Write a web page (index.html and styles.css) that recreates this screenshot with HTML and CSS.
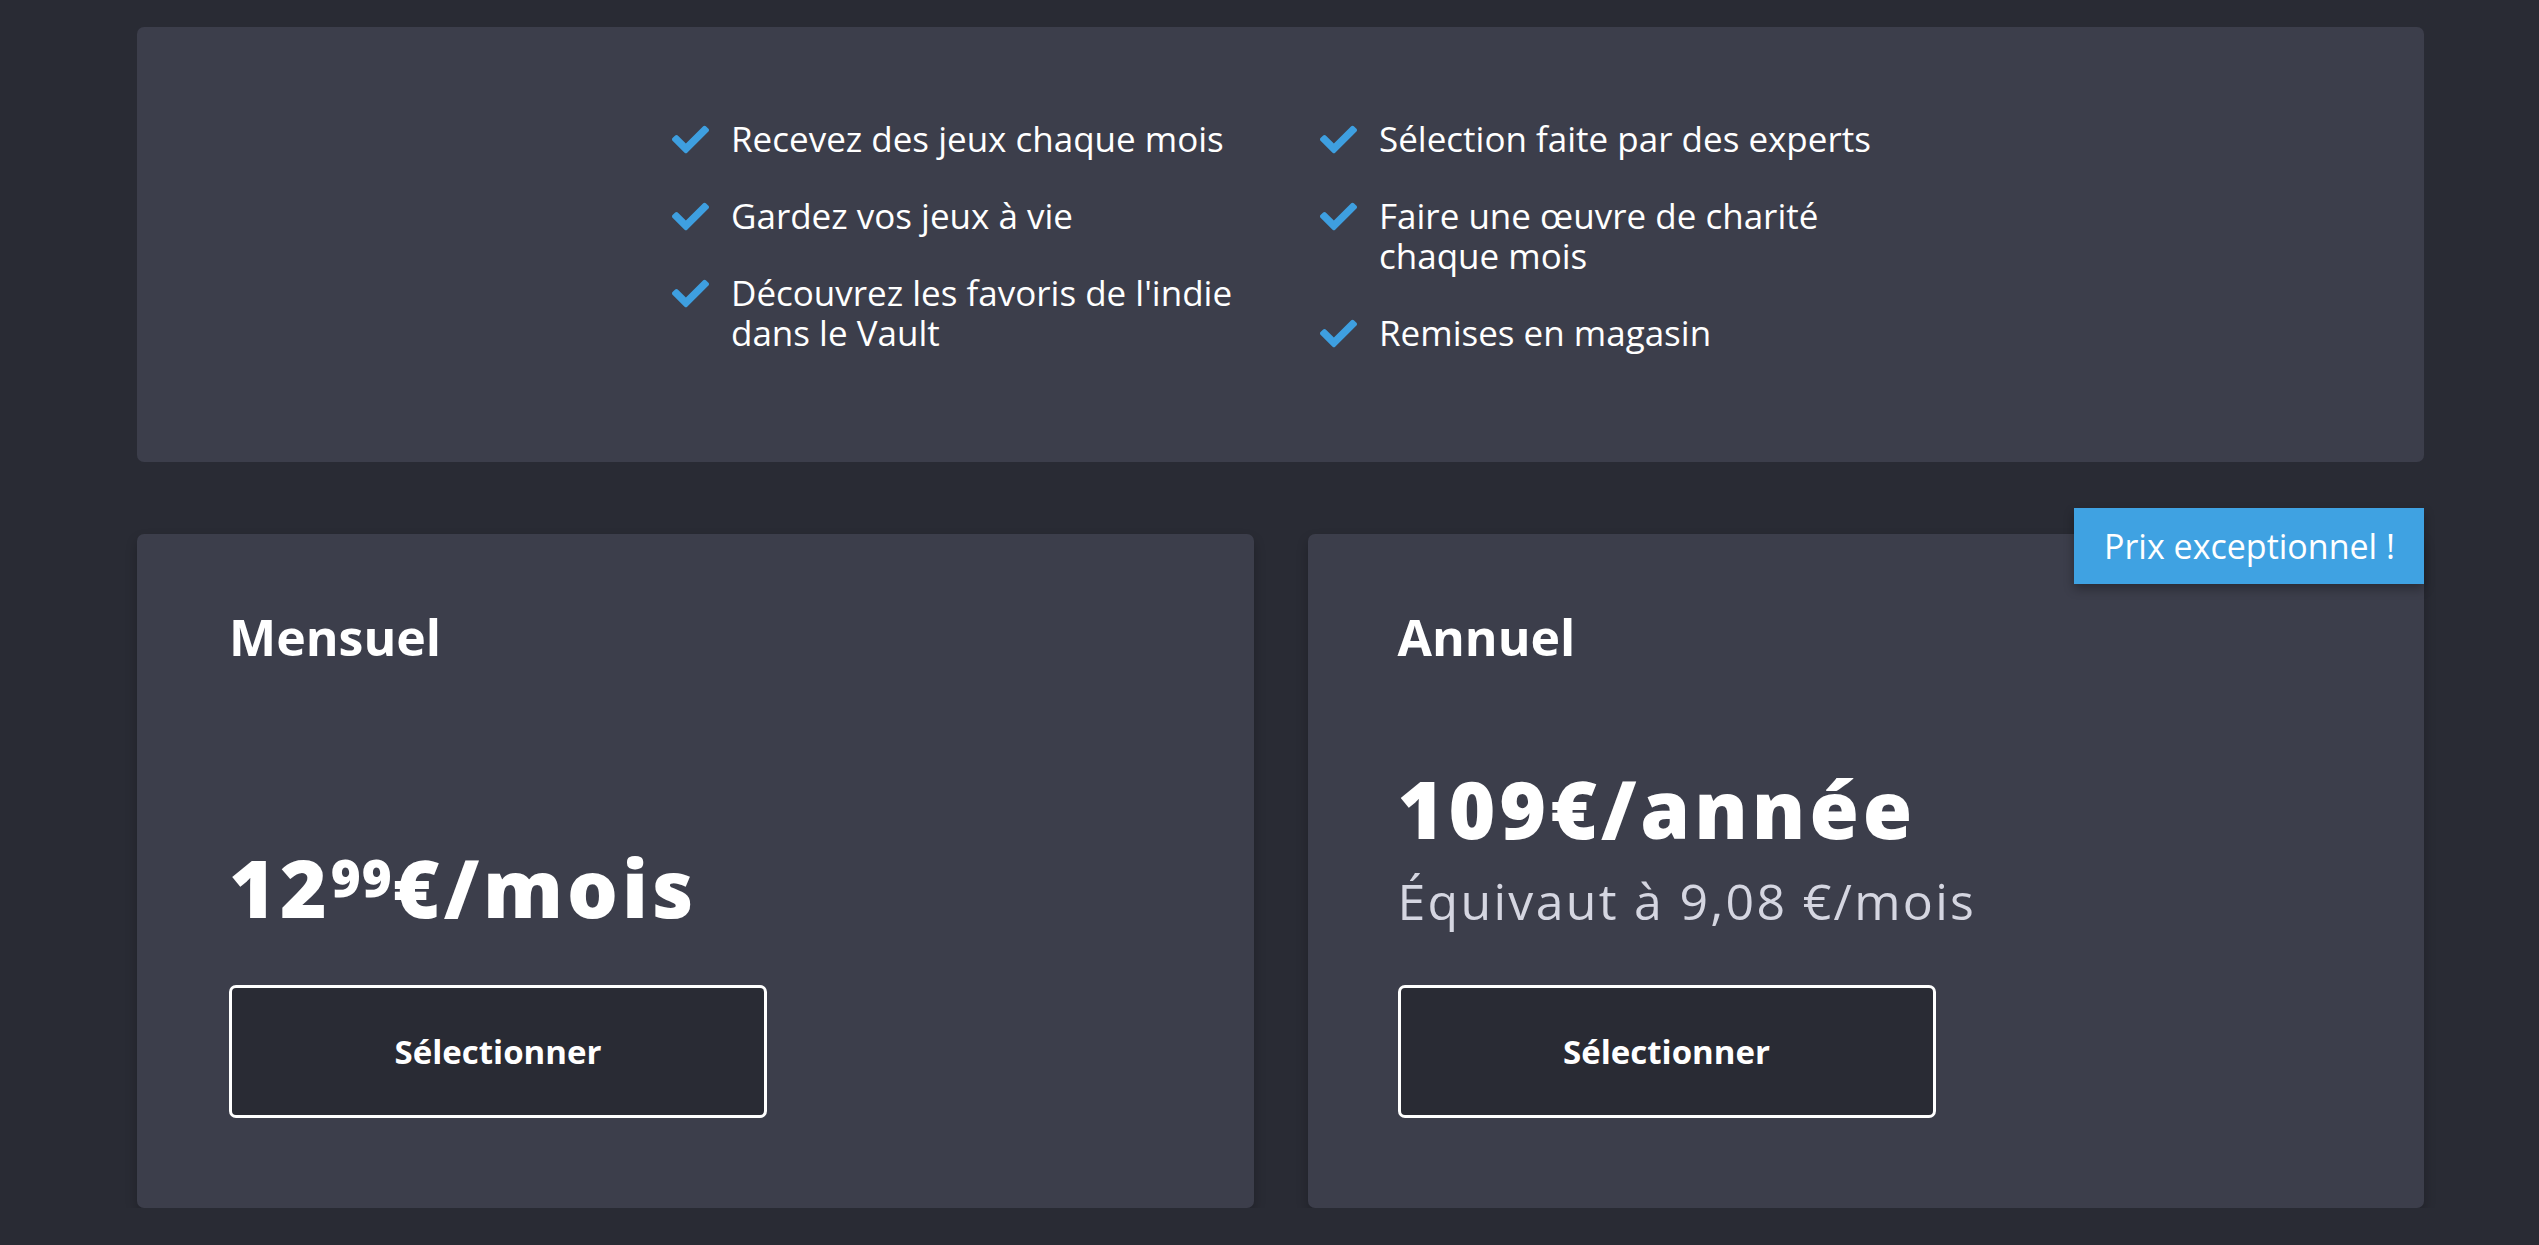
FILE: index.html
```html
<!DOCTYPE html>
<html lang="fr">
<head>
<meta charset="utf-8">
<title>Abonnement</title>
<link rel="stylesheet" href="styles.css">
</head>
<body>
<main class="page">
  <section class="perks">
    <div class="perks-grid">
      <ul class="perk-col">
        <li class="perk"><svg class="check" viewBox="0 64 512 384"><path d="M173.898 439.404l-166.4-166.4c-9.997-9.997-9.997-26.206 0-36.204l36.203-36.204c9.997-9.998 26.207-9.998 36.204 0L192 312.69 432.095 72.596c9.997-9.997 26.207-9.997 36.204 0l36.203 36.204c9.997 9.997 9.997 26.206 0 36.204l-294.4 294.401c-9.998 9.997-26.207 9.997-36.204-.001z"/></svg><span>Recevez des jeux chaque mois</span></li>
        <li class="perk"><svg class="check" viewBox="0 64 512 384"><path d="M173.898 439.404l-166.4-166.4c-9.997-9.997-9.997-26.206 0-36.204l36.203-36.204c9.997-9.998 26.207-9.998 36.204 0L192 312.69 432.095 72.596c9.997-9.997 26.207-9.997 36.204 0l36.203 36.204c9.997 9.997 9.997 26.206 0 36.204l-294.4 294.401c-9.998 9.997-26.207 9.997-36.204-.001z"/></svg><span>Gardez vos jeux à vie</span></li>
        <li class="perk"><svg class="check" viewBox="0 64 512 384"><path d="M173.898 439.404l-166.4-166.4c-9.997-9.997-9.997-26.206 0-36.204l36.203-36.204c9.997-9.998 26.207-9.998 36.204 0L192 312.69 432.095 72.596c9.997-9.997 26.207-9.997 36.204 0l36.203 36.204c9.997 9.997 9.997 26.206 0 36.204l-294.4 294.401c-9.998 9.997-26.207 9.997-36.204-.001z"/></svg><span>Découvrez les favoris de l'indie<br>dans le Vault</span></li>
      </ul>
      <ul class="perk-col">
        <li class="perk"><svg class="check" viewBox="0 64 512 384"><path d="M173.898 439.404l-166.4-166.4c-9.997-9.997-9.997-26.206 0-36.204l36.203-36.204c9.997-9.998 26.207-9.998 36.204 0L192 312.69 432.095 72.596c9.997-9.997 26.207-9.997 36.204 0l36.203 36.204c9.997 9.997 9.997 26.206 0 36.204l-294.4 294.401c-9.998 9.997-26.207 9.997-36.204-.001z"/></svg><span>Sélection faite par des experts</span></li>
        <li class="perk"><svg class="check" viewBox="0 64 512 384"><path d="M173.898 439.404l-166.4-166.4c-9.997-9.997-9.997-26.206 0-36.204l36.203-36.204c9.997-9.998 26.207-9.998 36.204 0L192 312.69 432.095 72.596c9.997-9.997 26.207-9.997 36.204 0l36.203 36.204c9.997 9.997 9.997 26.206 0 36.204l-294.4 294.401c-9.998 9.997-26.207 9.997-36.204-.001z"/></svg><span>Faire une œuvre de charité<br>chaque mois</span></li>
        <li class="perk"><svg class="check" viewBox="0 64 512 384"><path d="M173.898 439.404l-166.4-166.4c-9.997-9.997-9.997-26.206 0-36.204l36.203-36.204c9.997-9.998 26.207-9.998 36.204 0L192 312.69 432.095 72.596c9.997-9.997 26.207-9.997 36.204 0l36.203 36.204c9.997 9.997 9.997 26.206 0 36.204l-294.4 294.401c-9.998 9.997-26.207 9.997-36.204-.001z"/></svg><span>Remises en magasin</span></li>
      </ul>
    </div>
  </section>

  <section class="plans">
    <article class="plan">
      <h2 class="plan-title">Mensuel</h2>
      <div class="price-block">
        <div class="price">12<sup class="cents">99</sup>€/mois</div>
      </div>
      <button class="select-btn" type="button">Sélectionner</button>
    </article>
    <article class="plan plan-featured">
      <div class="badge">Prix exceptionnel !</div>
      <h2 class="plan-title">Annuel</h2>
      <div class="price-block">
        <div class="price">109€/année</div>
        <div class="price-note">Équivaut à 9,08 €/mois</div>
      </div>
      <button class="select-btn" type="button">Sélectionner</button>
    </article>
  </section>
</main>
</body>
</html>
```

FILE: styles.css
```css
* { box-sizing: border-box; }

html, body {
  margin: 0;
  padding: 0;
  background: #292b34;
  color: #ffffff;
  font-family: "Open Sans", "Noto Sans", sans-serif;
}

.page {
  width: 2287px;
  margin-left: 137px;
  padding-top: 27px;
}

/* ---------- perks panel ---------- */
.perks {
  background: #3c3e4b;
  border-radius: 7px;
  padding: 92px 0 109px 31px;
}

.perks-grid {
  display: flex;
  justify-content: center;
  gap: 48px;
}

.perk-col {
  list-style: none;
  margin: 0;
  padding: 0;
  width: 600px;
  display: flex;
  flex-direction: column;
  gap: 37px;
}

.perk {
  display: flex;
  align-items: flex-start;
  gap: 22px;
  font-size: 35px;
  line-height: 40px;
  color: #ffffff;
}

.check {
  flex: none;
  width: 37px;
  height: 29px;
  margin-top: 6px;
  fill: #3e9fe0;
}

/* ---------- plans ---------- */
.plans {
  display: grid;
  grid-template-columns: 1fr 1fr;
  gap: 54px;
  margin-top: 72px;
}

.plan {
  position: relative;
  min-height: 674px;
  background: #3c3e4b;
  border-radius: 7px;
  padding: 78px 90px 90px 92px;
  display: flex;
  flex-direction: column;
  align-items: flex-start;
  box-shadow: 0 6px 12px rgba(0, 0, 0, 0.22);
}

.plan-featured {
  padding-left: 90px;
}

.plan-title {
  margin: 0;
  font-size: 50px;
  line-height: 50px;
  font-weight: 700;
  color: #ffffff;
}

.price-block {
  margin-top: auto;
  margin-bottom: 59px;
}

.price {
  font-size: 80px;
  line-height: 78px;
  font-weight: 800;
  letter-spacing: 4px;
  color: #ffffff;
  white-space: nowrap;
}

.cents {
  font-size: 0.64em;
  line-height: 0;
  letter-spacing: 1px;
  vertical-align: 0.42em;
}

.price-note {
  margin-top: 37px;
  margin-bottom: 8px;
  font-size: 50px;
  line-height: 34px;
  letter-spacing: 2.3px;
  color: #d5d6e1;
  white-space: nowrap;
}

.select-btn {
  width: 538px;
  height: 133px;
  background: #292b34;
  border: 3px solid #ffffff;
  border-radius: 7px;
  color: #ffffff;
  font-family: "Open Sans", "Noto Sans", sans-serif;
  font-size: 33px;
  font-weight: 700;
  cursor: pointer;
}

.badge {
  position: absolute;
  top: -26px;
  right: 0;
  height: 76px;
  padding: 0 29px 0 30px;
  background: #3fa2e2;
  color: #ffffff;
  font-size: 34px;
  line-height: 76px;
  box-shadow: 0 5px 10px rgba(0, 0, 0, 0.3);
}
```
